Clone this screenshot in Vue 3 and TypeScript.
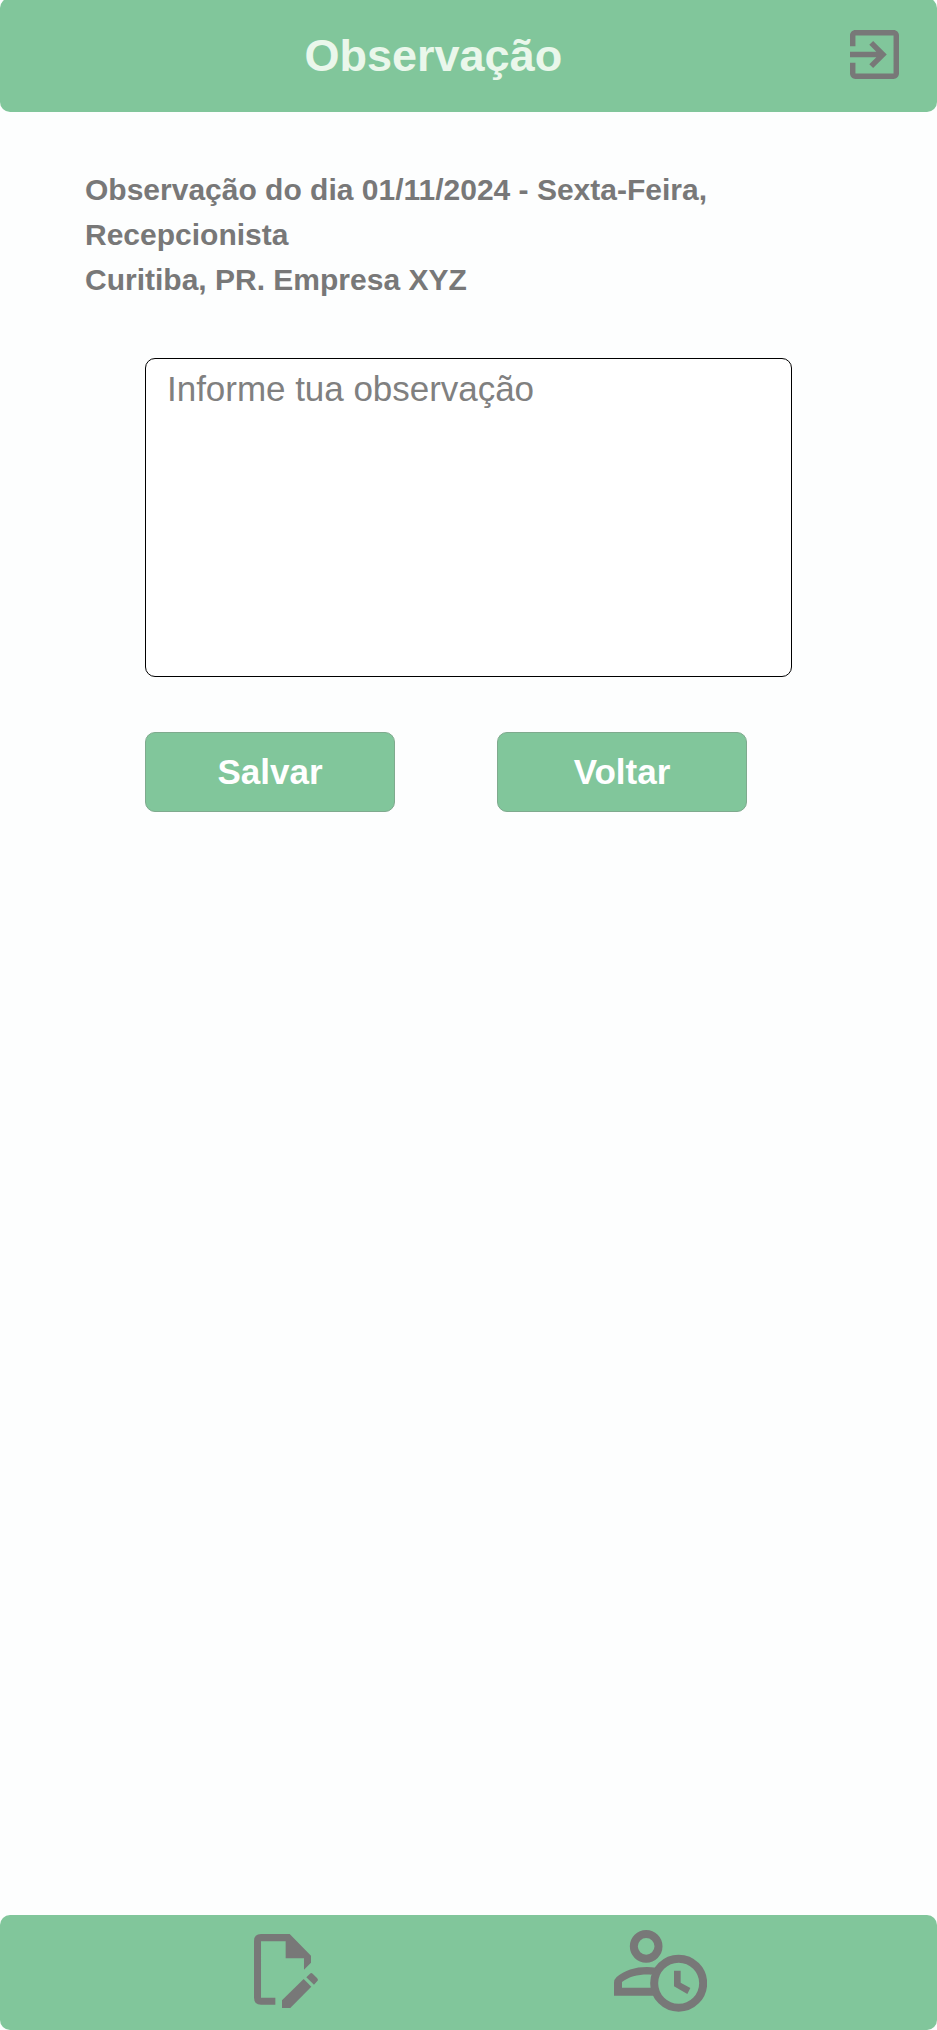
<script setup lang="ts">
import { ref } from 'vue'

const observacao = ref<string>('')
const detalhes: string[] = [
  'Observação do dia 01/11/2024 - Sexta-Feira,',
  'Recepcionista',
  'Curitiba, PR. Empresa XYZ',
]
</script>

<template>
  <div class="screen">
    <header class="topbar">
      <h1 class="title">Observação</h1>
      <svg class="exit" viewBox="3 3 18 18" role="img" aria-label="Sair">
        <path d="M10.09 15.59L11.5 17l5-5-5-5-1.41 1.41L12.67 11H3v2h9.67l-2.58 2.59zM19 3H5c-1.11 0-2 .9-2 2v4h2V5h14v14H5v-4H3v4c0 1.1.89 2 2 2h14c1.1 0 2-.9 2-2V5c0-1.1-.9-2-2-2z" />
      </svg>
    </header>

    <main class="content">
      <p class="info">
        <span v-for="linha in detalhes" :key="linha" class="line">{{ linha }}</span>
      </p>
      <textarea v-model="observacao" class="field" placeholder="Informe tua observação"></textarea>
      <div class="actions">
        <button type="button" class="btn">Salvar</button>
        <button type="button" class="btn">Voltar</button>
      </div>
    </main>

    <footer class="bottombar">
      <svg class="doc" viewBox="57 101 192 223" role="img" aria-label="Editar">
        <path d="M78 101H164L228 166V187L207 208V174H152V123H78V292H121V313H78Q57 313 57 292V122Q57 101 78 101Z" />
        <path d="M141 324V300L206 236L229 259L165 324Z" />
        <path d="M214 231L225 220Q229 216 233 220L246 233Q251 238 247 242L237 253Z" />
      </svg>
      <svg class="person" viewBox="42 91 279 245" role="img" aria-label="Ponto">
        <circle class="ring" cx="138.5" cy="140" r="37" stroke-width="24" />
        <circle class="ring" cx="236" cy="250.500" r="73.500" stroke-width="24" />
        <path d="M42 288V249Q42 239 50 232C79 206 125 197 169 204L154 225C119 223 88 230 66 247V264H154L164 288Z" />
        <path d="M222 213H242V249L271 265L262 283L222 260Z" />
      </svg>
    </footer>
  </div>
</template>

<style>
body {
  margin: 0;
  background: #fdfefe;
}
</style>

<style scoped>
.screen {
  width: 937px;
  height: 2030px;
  display: flex;
  flex-direction: column;
  overflow: hidden;
  background: #fdfefe;
  font-family: "Liberation Sans", Arial, sans-serif;
}
.topbar {
  box-sizing: border-box;
  flex: none;
  height: 114px;
  margin-top: -2px;
  padding: 0 38px 0 304.500px;
  display: flex;
  align-items: center;
  justify-content: space-between;
  background: #81c69b;
  border-radius: 10px;
}
.title {
  margin: 2px 0 0;
  font-size: 45px;
  line-height: 52px;
  font-weight: bold;
  color: #eaf7eb;
}
.exit {
  width: 49px;
  height: 49px;
  margin-bottom: 1px;
  fill: #787878;
}
.content {
  flex: 1;
  padding: 55px 145px 0;
}
.info {
  margin: 0 0 56px -60px;
  font-size: 30px;
  line-height: 45px;
  font-weight: bold;
  color: #787878;
}
.line {
  display: block;
}
.field {
  display: block;
  box-sizing: border-box;
  width: 647px;
  height: 319px;
  margin: 0;
  padding: 10px 21px;
  border: 1px solid #000;
  border-radius: 10px;
  outline: none;
  resize: none;
  background: #fff;
  font: 35px/40px "Liberation Sans", Arial, sans-serif;
  letter-spacing: -0.03px;
  color: #787878;
}
.field::placeholder {
  color: #808080;
  opacity: 1;
}
.actions {
  display: flex;
  gap: 102px;
  margin-top: 55px;
}
.btn {
  box-sizing: border-box;
  width: 250px;
  height: 80px;
  padding: 0;
  border: 1px solid #7faa8e;
  border-radius: 10px;
  background: #81c69b;
  font: bold 35px/40px "Liberation Sans", Arial, sans-serif;
  color: #fff;
}
.bottombar {
  box-sizing: border-box;
  flex: none;
  height: 115px;
  padding: 15px 230px 0 254px;
  display: flex;
  justify-content: space-between;
  align-items: flex-start;
  background: #81c69b;
  border-radius: 10px;
  fill: #787878;
}
.doc {
  width: 64px;
  height: 74.300px;
  margin-top: 4px;
}
.person {
  width: 93px;
  height: 81.700px;
}
.ring {
  fill: none;
  stroke: #787878;
}
</style>
